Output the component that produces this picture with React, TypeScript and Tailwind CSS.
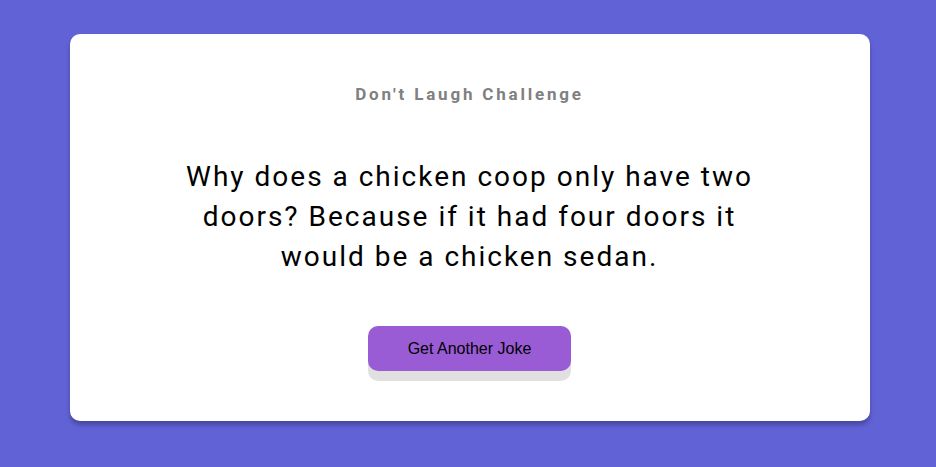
import React from "react";

const App = () => {
  return (
    <div className="min-h-screen w-full bg-[#6062d6] flex justify-center pt-[34px] pl-[3px]">
      <div className="w-[800px] h-[387px] bg-white rounded-[10px] shadow-[0_4px_4px_rgba(0,0,0,0.25)] flex flex-col items-center pt-[50px] px-[50px]">
        <h1 className="h-5 leading-5 text-[17px] font-bold tracking-[2.8px] text-[#808080] font-['Roboto',sans-serif]">
          Don't Laugh Challenge
        </h1>
        <p className="mt-[53px] w-[600px] text-center text-[28px] leading-[40px] tracking-[2px] text-black font-['Roboto',sans-serif]">
          Why does a chicken coop only have two doors? Because if it had four doors it would be a chicken sedan.
        </p>
        <button className="mt-[49px] w-[203px] h-[45px] rounded-[10px] bg-[#9a5cd5] text-[16px] text-black font-['Liberation_Sans',Arial,sans-serif] shadow-[0_10px_0_rgba(0,0,0,0.12)]">
          Get Another Joke
        </button>
      </div>
    </div>
  );
};

export default App;
